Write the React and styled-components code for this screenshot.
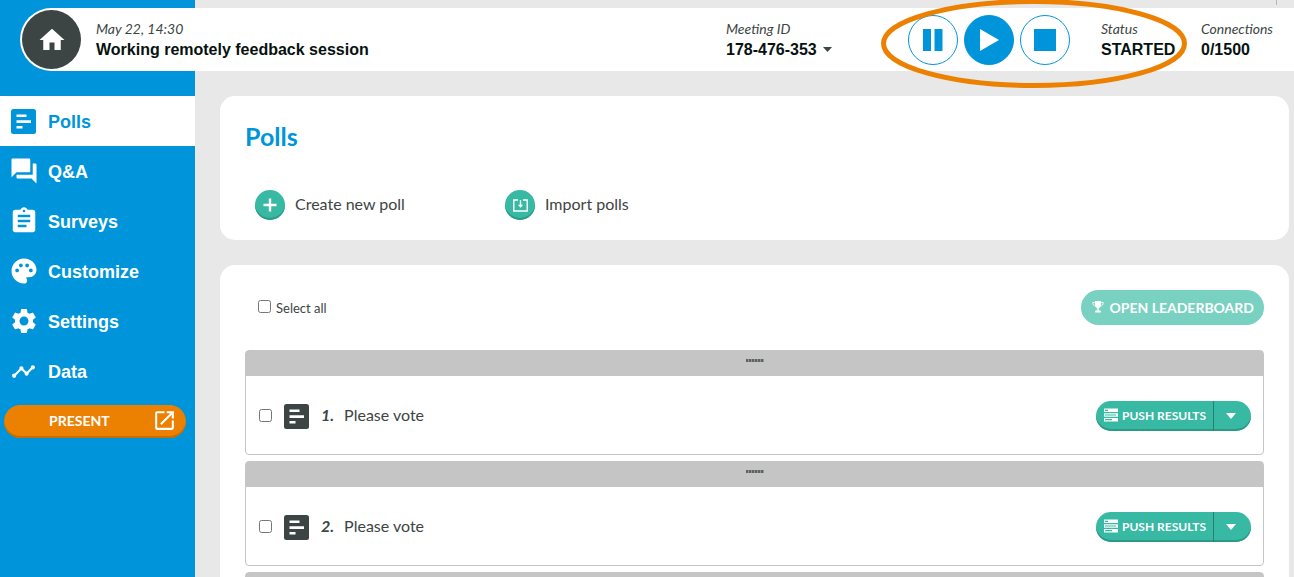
import styled, { createGlobalStyle } from "styled-components";
import {
  MdHome,
  MdForum,
  MdAssignment,
  MdPalette,
  MdSettings,
  MdTimeline,
  MdOpenInNew,
} from "react-icons/md";

const polls = [
  { id: 1, title: "Please vote" },
  { id: 2, title: "Please vote" },
  { id: 3, title: "Please vote" },
];

const PollIcon = ({ size = 25, color, bars }) => (
  <svg width={size} height={size} viewBox="0 0 25 25" aria-hidden="true">
    <rect width="25" height="25" rx="2.5" fill={color} />
    <path d="M5.5 5.5h10v2.6h-10zM5.5 11.2h14.5v2.8h-14.5zM5.5 16.9h6v2.6h-6z" fill={bars} />
  </svg>
);

const ImportIcon = () => (
  <svg width="15" height="13" viewBox="0 0 15 13" aria-hidden="true">
    <path d="M5 1H.8v11h13.400V1H10" fill="none" stroke="#fff" strokeWidth="1.4" />
    <path d="M6.800 1h1.400v4.700h2L7.500 8.700 4.800 5.700h2z" fill="#fff" />
  </svg>
);

const PlusIcon = () => (
  <svg width="14" height="14" viewBox="0 0 14 14" aria-hidden="true">
    <path d="M7 .5v13M.5 7h13" stroke="#fff" strokeWidth="2.4" />
  </svg>
);

const TrophyIcon = () => (
  <svg width="12" height="12" viewBox="0 0 12 12" aria-hidden="true">
    <path d="M3 0h6v3.500C9 5.800 7.600 7 6.700 7.300v2.200H8c.6 0 .8.500.8 1.200v.8H3.200v-.8c0-.7.2-1.200.8-1.200h1.300V7.300C4.400 7 3 5.800 3 3.500z" fill="#fff" />
    <path d="M3 1.400H.8c0 2.300 1 3.500 2.900 3.700M9 1.400h2.200c0 2.300-1 3.500-2.900 3.700" fill="none" stroke="#fff" strokeWidth=".9" />
  </svg>
);

const ResultsIcon = () => (
  <svg width="14" height="14" viewBox="0 0 14 14" aria-hidden="true">
    <path d="M0 .5h14v3.600H0zM0 5.200h14v3.600H0zM0 9.900h14v3.600H0z" fill="#fff" />
    <path d="M1 1.700h3v1.200H1zM1 6.400h11v1.200H1zM1 11.100h7v1.200H1z" fill="#37b9a3" />
  </svg>
);

const Caret = ({ width, height }) => (
  <svg width={width} height={height} viewBox="0 0 10 6" preserveAspectRatio="none" aria-hidden="true">
    <path d="M0 0h10L5 6z" fill="currentColor" />
  </svg>
);

const navItems = [
  { label: "Polls", icon: <PollIcon color="#0095db" bars="#fff" />, active: true },
  { label: "Q&A", icon: <MdForum size={30} /> },
  { label: "Surveys", icon: <MdAssignment size={30} /> },
  { label: "Customize", icon: <MdPalette size={30} /> },
  { label: "Settings", icon: <MdSettings size={30} /> },
  { label: "Data", icon: <MdTimeline size={25} /> },
];

const Header = () => (
  <HeaderBar>
    <HomeLink href="#home" aria-label="Home">
      <MdHome size={30} />
    </HomeLink>
    <Session>
      <Caption>May 22, 14:30</Caption>
      <Value as="h1">Working remotely feedback session</Value>
    </Session>
    <Stat $width="182px">
      <Caption>Meeting ID</Caption>
      <MeetingButton type="button">
        178-476-353
        <Caret width={9} height={5} />
      </MeetingButton>
    </Stat>
    <Controls>
      <RoundButton type="button" aria-label="Pause">
        <svg width="20" height="24" viewBox="0 0 20 24">
          <path d="M0 1h8v22H0zM11.500 1h8v22h-8z" fill="currentColor" />
        </svg>
      </RoundButton>
      <RoundButton type="button" aria-label="Start" $active>
        <svg width="20" height="24" viewBox="0 0 20 24">
          <path d="M1 1l19 11L1 23z" fill="currentColor" />
        </svg>
      </RoundButton>
      <RoundButton type="button" aria-label="Stop">
        <svg width="22" height="22" viewBox="0 0 22 22">
          <path d="M0 0h22v22H0z" fill="currentColor" />
        </svg>
      </RoundButton>
      <Highlight viewBox="0 0 306 89" aria-hidden="true">
        <ellipse cx="153" cy="44.500" rx="150.500" ry="42" fill="none" stroke="#ec8000" strokeWidth="5" />
      </Highlight>
    </Controls>
    <Stat $width="100px">
      <Caption>Status</Caption>
      <Value>STARTED</Value>
    </Stat>
    <Stat $width="93px">
      <Caption>Connections</Caption>
      <Value>0/1500</Value>
    </Stat>
  </HeaderBar>
);

const Sidebar = () => (
  <Side>
    <nav>
      {navItems.map((item) => (
        <NavItem key={item.label} href={`#${item.label.toLowerCase()}`} $active={item.active}>
          <NavIcon>{item.icon}</NavIcon>
          <NavLabel>{item.label}</NavLabel>
        </NavItem>
      ))}
    </nav>
    <PresentButton type="button">
      PRESENT
      <MdOpenInNew size={25} />
    </PresentButton>
  </Side>
);

const PollRow = ({ poll }) => (
  <PollItem>
    <DragBar>
      <DragDots />
    </DragBar>
    <PollBody>
      <Checkbox aria-label={`Select poll ${poll.id}`} />
      <PollIcon color="#3c4543" bars="#fff" />
      <PollText>
        <PollNumber>{poll.id}.</PollNumber>
        {poll.title}
      </PollText>
      <SplitButton>
        <PushButton type="button">
          <ResultsIcon />
          PUSH RESULTS
        </PushButton>
        <MoreButton type="button" aria-label="More actions">
          <Caret width={10} height={6} />
        </MoreButton>
      </SplitButton>
    </PollBody>
  </PollItem>
);

const App = () => {
  return (
    <>
      <GlobalStyle />
      <Page>
        <TopStrip />
        <Header />
        <Sidebar />
        <Main>
          <Card>
            <Title>Polls</Title>
            <Actions>
              <ActionButton type="button">
                <ActionIcon>
                  <PlusIcon />
                </ActionIcon>
                <ActionLabel>Create new poll</ActionLabel>
              </ActionButton>
              <ActionButton type="button">
                <ActionIcon>
                  <ImportIcon />
                </ActionIcon>
                <ActionLabel>Import polls</ActionLabel>
              </ActionButton>
            </Actions>
          </Card>
          <Card>
            <ListHead>
              <SelectAll>
                <Checkbox />
                Select all
              </SelectAll>
              <LeaderboardButton type="button">
                <TrophyIcon />
                OPEN LEADERBOARD
              </LeaderboardButton>
            </ListHead>
            <PollList>
              {polls.map((poll) => (
                <PollRow key={poll.id} poll={poll} />
              ))}
            </PollList>
          </Card>
        </Main>
      </Page>
    </>
  );
};

const GlobalStyle = createGlobalStyle`
  * {
    box-sizing: border-box;
  }

  html {
    scrollbar-width: none;
  }

  body {
    margin: 0;
    background: #e8e8e8;
    color: #3c4543;
    font-family: Lato, "Open Sans", sans-serif;
    font-size: 16px;
  }

  button {
    border: 0;
    padding: 0;
    background: none;
    color: inherit;
    font: inherit;
    cursor: pointer;
  }

  a {
    text-decoration: none;
  }

  svg {
    display: block;
    flex-shrink: 0;
  }
`;

const Page = styled.div`
  display: grid;
  grid-template-columns: 195px 1fr;
  grid-template-rows: 8px auto 1fr;
  min-height: 100vh;
`;

const TopStrip = styled.div`
  grid-area: 1 / 2;
  height: 5px;
  margin-right: 17px;
  border-right: 1px solid #b8b8b8;
`;

const HeaderBar = styled.header`
  grid-area: 2 / 1 / 3 / 3;
  z-index: 1;
  display: flex;
  align-items: center;
  height: 63px;
  margin-left: 20px;
  background: #fff;
  border-radius: 32px 0 0 32px;
`;

const HomeLink = styled.a`
  display: flex;
  align-items: center;
  justify-content: center;
  width: 59px;
  height: 59px;
  margin-left: 2px;
  border-radius: 50%;
  background: #3c4543;
  color: #fff;
`;

const Session = styled.div`
  flex: 1;
  margin-left: 15px;
`;

const Stat = styled.div`
  width: ${({ $width }) => $width};
`;

const Caption = styled.div`
  font-size: 14px;
  line-height: 20px;
  font-style: italic;
`;

const Value = styled.div`
  margin: 0;
  color: #06120f;
  font: bold 16px/22px "Liberation Sans", Arial, sans-serif;
`;

const MeetingButton = styled.button`
  display: flex;
  align-items: center;
  gap: 6px;

  && {
    color: #06120f;
    font: bold 16px/22px "Liberation Sans", Arial, sans-serif;
  }

  svg {
    color: #3c4543;
  }
`;

const Controls = styled.div`
  position: relative;
  display: flex;
  gap: 6px;
  margin-right: 31px;
`;

const RoundButton = styled.button`
  display: flex;
  align-items: center;
  justify-content: center;
  width: 50px;
  height: 50px;
  border: 1px solid #0095db;
  border-radius: 50%;
  background: ${({ $active }) => ($active ? "#0095db" : "#fff")};
  color: ${({ $active }) => ($active ? "#fff" : "#0095db")};
`;

/* marker drawn over the session controls */
const Highlight = styled.svg`
  position: absolute;
  left: -27px;
  top: -16px;
  width: 306px;
  height: 89px;
  pointer-events: none;
`;

const Side = styled.aside`
  grid-area: 1 / 1 / 4 / 2;
  padding-top: 96px;
  background: #0095db;
`;

const NavItem = styled.a`
  display: flex;
  align-items: center;
  height: 50px;
  background: ${({ $active }) => ($active ? "#fff" : "transparent")};
  color: ${({ $active }) => ($active ? "#0095db" : "#fff")};
  font: bold 18px/24px "Liberation Sans", Arial, sans-serif;
`;

const NavIcon = styled.span`
  display: flex;
  justify-content: center;
  width: 47px;
`;

const NavLabel = styled.span`
  padding: 2px 0 0 1px;
`;

const PresentButton = styled.button`
  display: flex;
  align-items: center;
  justify-content: space-between;
  width: calc(100% - 13px);
  height: 33px;
  margin: 9px 9px 0 4px;
  padding: 0 9px 2px 45px;
  border-radius: 17px;
  background: #ec8000;
  box-shadow: inset 0 -2px 0 #c96d00;
  color: #fff;
  font-size: 14px;
  font-weight: bold;
`;

const Main = styled.main`
  grid-area: 3 / 2;
  display: flex;
  flex-direction: column;
  gap: 25px;
  padding: 25px 5px 25px 25px;
`;

const Card = styled.section`
  padding: 25px;
  border-radius: 15px;
  background: #fff;
`;

const Title = styled.h2`
  margin: 0;
  color: #0095db;
  font-size: 25px;
  line-height: 30px;
`;

const Actions = styled.div`
  display: flex;
  margin: 39px 0 -5px 10px;
`;

const ActionButton = styled.button`
  display: flex;
  align-items: center;
  gap: 10px;
  width: 250px;
`;

const ActionIcon = styled.span`
  display: flex;
  align-items: center;
  justify-content: center;
  width: 30px;
  height: 30px;
  border-radius: 50%;
  background: #37b9a3;
  box-shadow: inset 0 -2px 0 #2d9a88;
`;

const ActionLabel = styled.span`
  padding-bottom: 4px;
`;

const ListHead = styled.div`
  display: flex;
  align-items: center;
  justify-content: space-between;
  margin-bottom: 25px;
`;

const SelectAll = styled.label`
  display: flex;
  align-items: center;
  gap: 5px;
  margin-left: 13px;
  font-size: 13px;

  input {
    margin-bottom: 3px;
  }
`;

const Checkbox = styled.input.attrs({ type: "checkbox" })`
  width: 13px;
  height: 13px;
  margin: 0;
`;

const LeaderboardButton = styled.button`
  display: flex;
  align-items: center;
  gap: 5px;
  height: 35px;
  padding: 0 10px 1px 11px;
  border-radius: 18px;
  background: #78d1c1;
  color: #fff;
  font-size: 14px;
  font-weight: bold;
`;

const PollList = styled.ul`
  display: flex;
  flex-direction: column;
  gap: 6px;
  margin: 0;
  padding: 0;
  list-style: none;
`;

const PollItem = styled.li`
  border: 1px solid #c5c5c5;
  border-radius: 4px;
`;

const DragBar = styled.div`
  display: flex;
  justify-content: center;
  height: 25px;
  padding-top: 8px;
  background: #c5c5c5;
  cursor: move;
`;

const DragDots = styled.span`
  width: 18px;
  height: 3px;
  background: repeating-linear-gradient(90deg, #5d6463 0 2px, #8f9493 2px 3px);
`;

const PollBody = styled.div`
  display: flex;
  align-items: center;
  gap: 12px;
  height: 78px;
  padding: 2px 12px 0 13px;

  input {
    margin-bottom: 2px;
  }
`;

const PollText = styled.div`
  flex: 1;
  padding-bottom: 4px;
`;

const PollNumber = styled.span`
  margin-right: 10px;
  font-weight: bold;
  font-style: italic;
`;

const SplitButton = styled.div`
  display: flex;
  height: 30px;
  border-radius: 15px;
  background: #37b9a3;
  box-shadow: inset 0 -2px 0 #2d9a88;
  color: #fff;
`;

const PushButton = styled.button`
  display: flex;
  align-items: center;
  gap: 4px;
  width: 118px;
  padding: 0 0 2px 8px;
  border-right: 1px solid #2b7f72;
  font-size: 12px;
  font-weight: bold;
  white-space: nowrap;
`;

const MoreButton = styled.button`
  display: flex;
  align-items: center;
  justify-content: center;
  width: 37px;
  padding-right: 3px;
`;

export default App;
